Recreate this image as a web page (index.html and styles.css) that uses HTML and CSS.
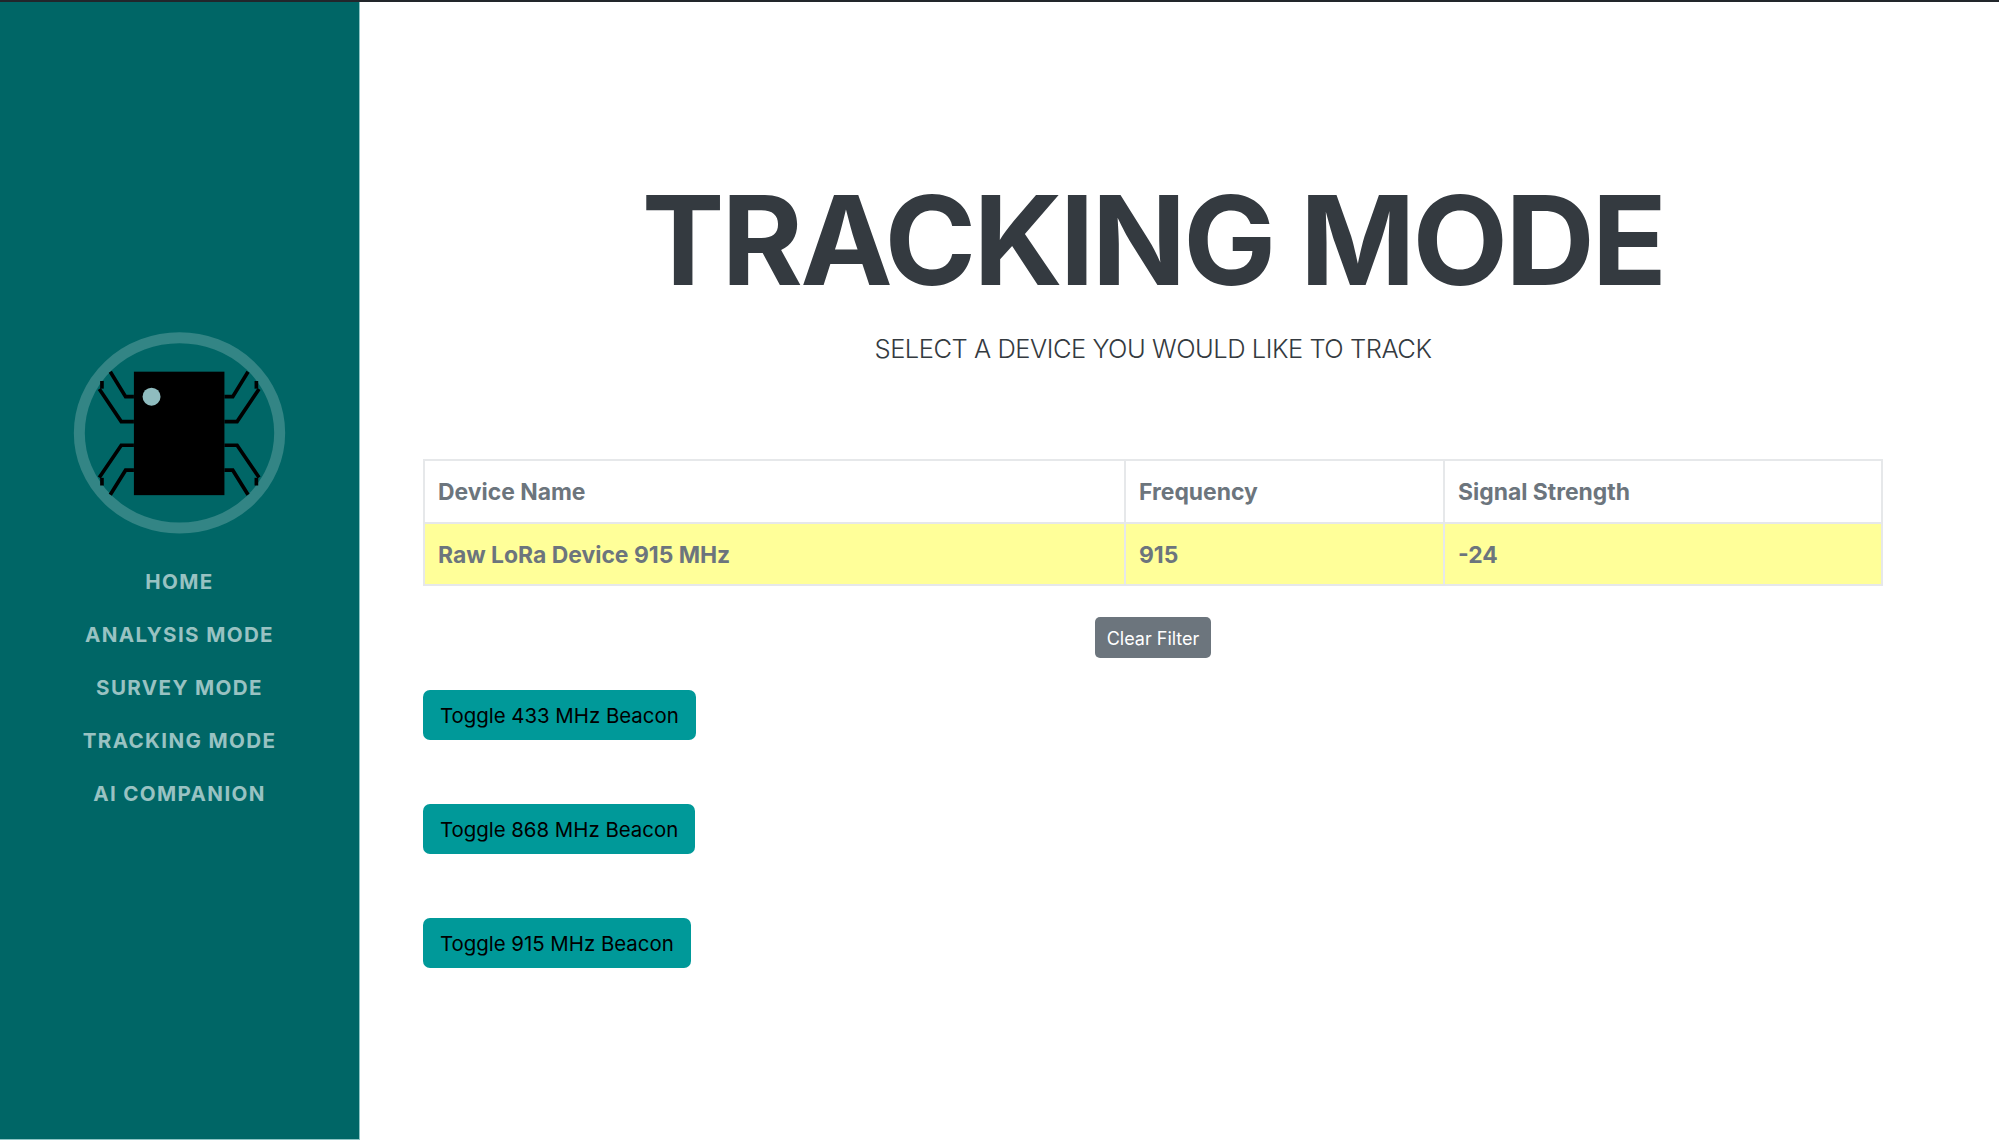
FILE: index.html
```html
<!DOCTYPE html>
<html lang="en">
<head>
    <meta charset="UTF-8">
    <meta name="viewport" content="width=device-width, initial-scale=1.0">
    <title>Tracking Mode</title>
    <link rel="stylesheet" href="styles.css">
</head>
<body>
    <div class="topbar"></div>
    <div class="wrapper">
        <!-- Sidebar -->
        <nav class="sidebar">
            <svg class="logo" viewBox="220 96 640 608" aria-hidden="true">
                <ellipse class="logo-ring" cx="540" cy="399" rx="301" ry="286"/>
                <g class="logo-legs">
                    <path d="M403 290H378L332 215"/>
                    <path d="M403 365H365L299 267"/>
                    <path d="M403 436H365L299 533"/>
                    <path d="M403 511H378L332 585"/>
                    <path d="M675 290H700L746 215"/>
                    <path d="M675 365H713L779 267"/>
                    <path d="M675 436H713L779 533"/>
                    <path d="M675 511H700L746 585"/>
                    <path d="M307 243V266"/>
                    <path d="M307 534V557"/>
                    <path d="M771 243V266"/>
                    <path d="M771 534V557"/>
                </g>
                <rect x="403" y="215" width="272" height="371"/>
                <circle class="logo-dot" cx="456" cy="290" r="27"/>
            </svg>
            <a href="#">Home</a>
            <a href="#">Analysis Mode</a>
            <a href="#">Survey Mode</a>
            <a href="#">Tracking Mode</a>
            <a href="#">AI Companion</a>
        </nav>

        <main class="content">
            <h1>TRACKING MODE</h1>
            <p class="lead">SELECT A DEVICE YOU WOULD LIKE TO TRACK</p>

            <table>
                <thead>
                    <tr>
                        <th class="col-name">Device Name</th>
                        <th class="col-freq">Frequency</th>
                        <th>Signal Strength</th>
                    </tr>
                </thead>
                <tbody>
                    <tr class="highlight">
                        <td>Raw LoRa Device 915 MHz</td>
                        <td>915</td>
                        <td>-24</td>
                    </tr>
                </tbody>
            </table>

            <div class="filter-row">
                <button class="btn-clear">Clear Filter</button>
            </div>

            <div class="beacons">
                <button class="btn-beacon">Toggle 433 MHz Beacon</button>
                <button class="btn-beacon">Toggle 868 MHz Beacon</button>
                <button class="btn-beacon">Toggle 915 MHz Beacon</button>
            </div>
        </main>
    </div>
</body>
</html>
```

FILE: styles.css
```css
* {
    box-sizing: border-box;
}
html, body {
    height: 100%;
}
body {
    margin: 0;
    padding-bottom: 1px;
    display: flex;
    flex-direction: column;
    font-family: Inter, "Liberation Sans", sans-serif;
    font-size: 20.4px;
    background-color: #fff;
}
.topbar {
    height: 2px;
    background-color: #22262b;
}
.wrapper {
    flex: 1;
    display: flex;
    min-height: 0;
}

/* Sidebar */
.sidebar {
    width: 360px;
    padding-top: 11px;
    display: flex;
    flex-direction: column;
    align-items: center;
    justify-content: center;
    background-color: #006666;
    border-right: 1px solid #8fc4c4;
    border-bottom: 1px solid #8fc4c4;
}
.logo {
    width: 213px;
    height: 202.5px;
    margin-bottom: 20px;
}
.logo-ring {
    fill: none;
    stroke: #338585;
    stroke-width: 33;
}
.logo-legs path {
    fill: none;
    stroke: #000;
    stroke-width: 11;
}
.logo-dot {
    fill: #8fbcbf;
}
.sidebar a {
    display: block;
    height: 53px;
    line-height: 53px;
    color: #99c2c2;
    font-size: 20.6px;
    font-weight: 700;
    letter-spacing: 1.35px;
    text-transform: uppercase;
    text-decoration: none;
}

/* Main content */
.content {
    flex: 1;
    padding: 0 116px 0 63px;
}
h1 {
    margin: 164px 0 0;
    color: #343a40;
    font-size: 124px;
    font-weight: 700;
    letter-spacing: -2.9px;
    line-height: 148px;
    text-align: center;
}
.lead {
    margin: 16px 0 0;
    color: #343a40;
    font-size: 25.5px;
    font-weight: 300;
    letter-spacing: -0.47px;
    line-height: 38px;
    text-align: center;
}
table {
    width: 100%;
    margin-top: 91px;
    border-collapse: collapse;
    table-layout: fixed;
}
th, td {
    height: 62.5px;
    padding: 2px 13px 0;
    border: 2px solid #e6e8ea;
    color: #6c757d;
    font-size: 22.9px;
    font-weight: 700;
    text-align: left;
}
.col-name {
    width: 701px;
}
.col-freq {
    width: 319px;
}
.highlight td {
    background-color: #ffff99;
}
.filter-row {
    display: flex;
    justify-content: center;
    margin-top: 31px;
}
.btn-clear {
    width: 116px;
    height: 41px;
    padding: 1px 0 0;
    border: none;
    border-radius: 5px;
    background-color: #6c757d;
    color: #fff;
    font-family: inherit;
    font-size: 18px;
}
.beacons {
    display: flex;
    flex-direction: column;
    align-items: flex-start;
    gap: 64px;
    margin-top: 32px;
}
.btn-beacon {
    height: 50px;
    padding: 0 16.9px;
    border: none;
    border-radius: 7px;
    background-color: #009999;
    color: #000;
    font-family: inherit;
    font-size: 20.4px;
}
```
